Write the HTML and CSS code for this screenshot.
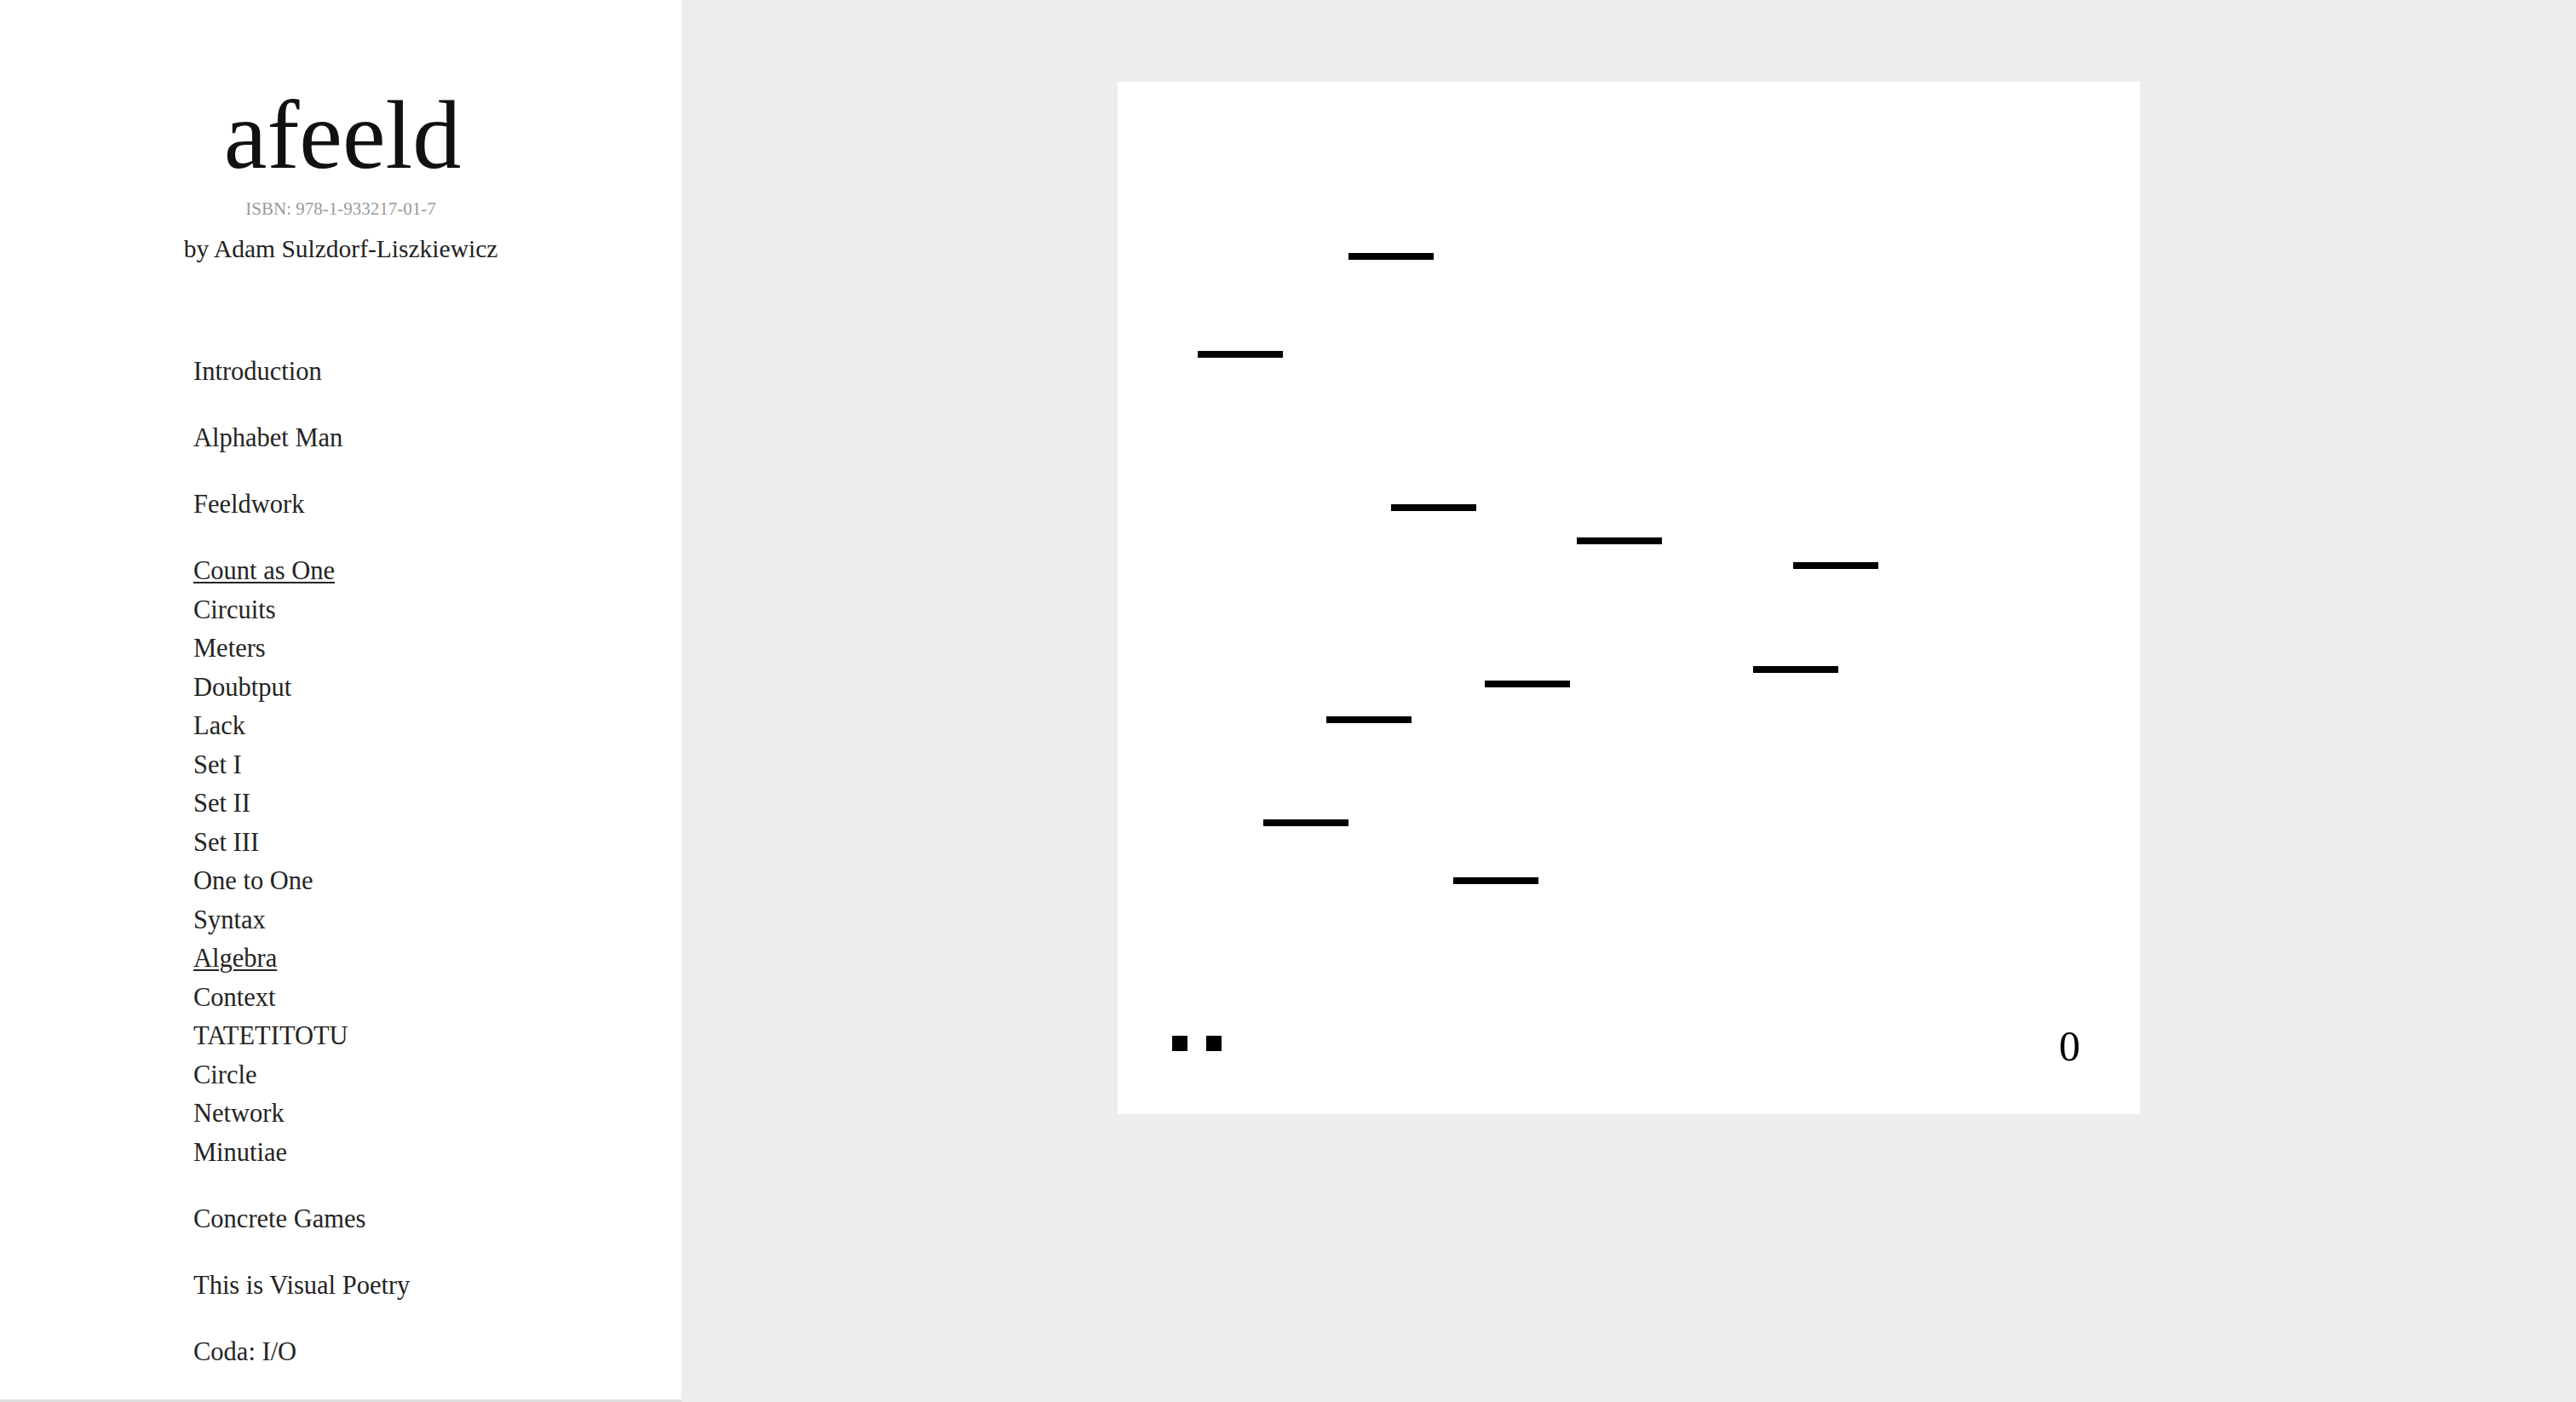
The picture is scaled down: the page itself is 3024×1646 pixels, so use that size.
FILE: index.html
```html
<!DOCTYPE html>
<html lang="en">
<head>
<meta charset="utf-8">
<title>afeeld</title>
<link rel="stylesheet" href="styles.css">
</head>
<body>
<aside class="sidebar">
  <h1 class="title">afeeld</h1>
  <p class="isbn">ISBN: 978-1-933217-01-7</p>
  <p class="author">by Adam Sulzdorf-Liszkiewicz</p>
  <nav class="nav">
    <a class="nav-item" href="#">Introduction</a>
    <a class="nav-item" href="#">Alphabet Man</a>
    <a class="nav-item" href="#">Feeldwork</a>
    <ul class="nav-group">
      <li><a class="nav-item is-visited" href="#">Count as One</a></li>
      <li><a class="nav-item" href="#">Circuits</a></li>
      <li><a class="nav-item" href="#">Meters</a></li>
      <li><a class="nav-item" href="#">Doubtput</a></li>
      <li><a class="nav-item" href="#">Lack</a></li>
      <li><a class="nav-item" href="#">Set I</a></li>
      <li><a class="nav-item" href="#">Set II</a></li>
      <li><a class="nav-item" href="#">Set III</a></li>
      <li><a class="nav-item" href="#">One to One</a></li>
      <li><a class="nav-item" href="#">Syntax</a></li>
      <li><a class="nav-item is-visited" href="#">Algebra</a></li>
      <li><a class="nav-item" href="#">Context</a></li>
      <li><a class="nav-item" href="#">TATETITOTU</a></li>
      <li><a class="nav-item" href="#">Circle</a></li>
      <li><a class="nav-item" href="#">Network</a></li>
      <li><a class="nav-item" href="#">Minutiae</a></li>
    </ul>
    <a class="nav-item" href="#">Concrete Games</a>
    <a class="nav-item" href="#">This is Visual Poetry</a>
    <a class="nav-item" href="#">Coda: I/O</a>
  </nav>
</aside>
<main class="stage">
  <div class="canvas">
    <span class="dash" style="left:271px;top:201px"></span>
    <span class="dash" style="left:94px;top:316px"></span>
    <span class="dash" style="left:321px;top:496px"></span>
    <span class="dash" style="left:539px;top:535px"></span>
    <span class="dash" style="left:793px;top:564px"></span>
    <span class="dash" style="left:746px;top:686px"></span>
    <span class="dash" style="left:431px;top:703px"></span>
    <span class="dash" style="left:245px;top:745px"></span>
    <span class="dash" style="left:171px;top:866px"></span>
    <span class="dash" style="left:394px;top:934px"></span>
    <div class="lives">
      <span class="life"></span>
      <span class="life"></span>
    </div>
    <div class="score">0</div>
  </div>
</main>
</body>
</html>
```

FILE: styles.css
```css
html, body {
  margin: 0;
  padding: 0;
  height: 100%;
}

body {
  display: flex;
  background: #ededed;
  font-family: "Liberation Serif", "Times New Roman", serif;
  overflow: hidden;
}

.sidebar {
  width: 800px;
  flex: none;
  height: 1646px;
  box-sizing: border-box;
  background: #ffffff;
  padding-top: 102px;
  border-bottom: 3px solid #dcdcdc;
}

.title {
  margin: 0;
  font-size: 114px;
  line-height: 114px;
  font-weight: normal;
  text-align: center;
  color: #111111;
  padding-left: 4px;
}

.isbn {
  margin: 19px 0 0;
  font-size: 21px;
  line-height: 21px;
  text-align: center;
  color: #9a9a9a;
}

.author {
  margin: 21px 0 0;
  font-size: 29.5px;
  line-height: 30px;
  text-align: center;
  color: #222222;
}

.nav {
  margin-top: 107px;
  padding-left: 227px;
  display: flex;
  flex-direction: column;
  align-items: flex-start;
  gap: 32.5px;
}

.nav-group {
  list-style: none;
  margin: 0;
  padding: 0;
  display: flex;
  flex-direction: column;
  align-items: flex-start;
}

.nav-item {
  display: block;
  font-size: 30.5px;
  line-height: 45.5px;
  color: #242424;
  text-decoration: none;
}

.nav-item.is-visited {
  text-decoration: underline;
  text-decoration-thickness: 2px;
  text-underline-offset: 3px;
}

.stage {
  flex: 1;
  display: flex;
  justify-content: center;
  align-items: flex-start;
  padding-top: 96px;
}

.canvas {
  position: relative;
  width: 1200px;
  height: 1212px;
  background: #ffffff;
}

.dash {
  position: absolute;
  width: 100px;
  height: 8px;
  background: #000000;
}

.lives {
  position: absolute;
  left: 64px;
  top: 1120px;
  display: flex;
  gap: 22px;
}

.life {
  width: 18px;
  height: 18px;
  background: #000000;
}

.score {
  position: absolute;
  left: 1105px;
  top: 1102px;
  font-family: "Liberation Serif", "Times New Roman", serif;
  font-size: 50px;
  line-height: 60px;
  color: #000000;
}
```
